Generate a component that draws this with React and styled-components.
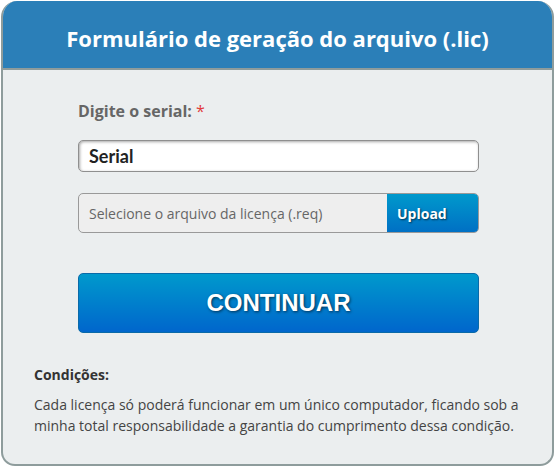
import React from "react";
import styled, { createGlobalStyle } from "styled-components";

const GlobalStyle = createGlobalStyle`
  html, body {
    margin: 0;
    padding: 0;
    background: #ffffff;
  }
  body {
    font-family: "Open Sans", "Liberation Sans", sans-serif;
  }
`;

const Page = styled.div`
  padding: 1px 0 1px 1px;
  width: 554px;
  height: 467px;
  box-sizing: border-box;
`;

const Card = styled.div`
  width: 553px;
  height: 465px;
  box-sizing: border-box;
  display: flex;
  flex-direction: column;
  border-radius: 16px 16px 14px 14px;
  overflow: hidden;
  background: #ebeeef;
  border: 2px solid #8e9c9c;
  border-top: none;
`;

const Header = styled.div`
  height: 67px;
  flex-shrink: 0;
  background: #2b7fb8;
  border-bottom: 2px solid #8e9c9c;
  display: flex;
  align-items: center;
  justify-content: center;
  margin: 0 -2px;
`;

const Title = styled.h1`
  margin: 0;
  padding-top: 6px;
  font-size: 22px;
  font-weight: 700;
  color: #ffffff;
`;

const Form = styled.div`
  padding: 30px 73px 0 75px;
  display: flex;
  flex-direction: column;
`;

const Label = styled.label`
  font-size: 16px;
  font-weight: 700;
  color: #666666;
  line-height: 22px;
`;

const Required = styled.span`
  color: #e23b3b;
  font-weight: 400;
  margin-left: 4px;
`;

const SerialInput = styled.div`
  margin-top: 18px;
  height: 32px;
  box-sizing: border-box;
  background: #ffffff;
  border: 1px solid #8f8f8f;
  border-radius: 5px;
  box-shadow: inset 1px 1px 3px rgba(0, 0, 0, 0.35);
  display: flex;
  align-items: center;
  padding-left: 10px;
  font-family: Lato, "Open Sans", sans-serif;
  font-size: 18px;
  font-weight: 700;
  color: #222222;
`;

const FileField = styled.div`
  margin-top: 21px;
  height: 40px;
  box-sizing: border-box;
  border: 1px solid #999999;
  border-radius: 5px;
  background: #eeeeee;
  display: flex;
  overflow: hidden;
`;

const FileText = styled.div`
  flex: 1;
  display: flex;
  align-items: center;
  padding-left: 10px;
  font-size: 14px;
  color: #666666;
`;

const UploadButton = styled.div`
  width: 91px;
  background: linear-gradient(#0099cc, #0070c4);
  display: flex;
  align-items: center;
  padding-left: 10px;
  box-sizing: border-box;
  font-size: 14px;
  font-weight: 700;
  color: #ffffff;
  text-shadow: 1px 1px 2px rgba(0, 0, 0, 0.6);
`;

const ContinueButton = styled.button`
  margin-top: 40px;
  height: 60px;
  border: 1px solid #0a6aa8;
  border-radius: 5px;
  background: linear-gradient(#0099cc, #0066cc);
  font-family: "Liberation Sans", Arial, sans-serif;
  font-size: 24px;
  font-weight: 700;
  color: #ffffff;
  text-shadow: 1px 1px 3px rgba(0, 0, 0, 0.6);
  cursor: pointer;
`;

const Conditions = styled.div`
  padding: 32px 20px 0 31px;
`;

const ConditionsTitle = styled.div`
  font-size: 14px;
  font-weight: 700;
  color: #333333;
  line-height: 20px;
`;

const ConditionsText = styled.p`
  margin: 9px 0 0;
  font-size: 14px;
  line-height: 21px;
  color: #444444;
`;

export default function App() {
  return (
    <>
      <GlobalStyle />
      <Page>
        <Card>
          <Header>
            <Title>Formulário de geração do arquivo (.lic)</Title>
          </Header>
          <Form>
            <Label>
              Digite o serial:<Required>*</Required>
            </Label>
            <SerialInput>Serial</SerialInput>
            <FileField>
              <FileText>Selecione o arquivo da licença (.req)</FileText>
              <UploadButton>Upload</UploadButton>
            </FileField>
            <ContinueButton>CONTINUAR</ContinueButton>
          </Form>
          <Conditions>
            <ConditionsTitle>Condições:</ConditionsTitle>
            <ConditionsText>
              Cada licença só poderá funcionar em um único computador, ficando
              sob a minha total responsabilidade a garantia do cumprimento
              dessa condição.
            </ConditionsText>
          </Conditions>
        </Card>
      </Page>
    </>
  );
}
